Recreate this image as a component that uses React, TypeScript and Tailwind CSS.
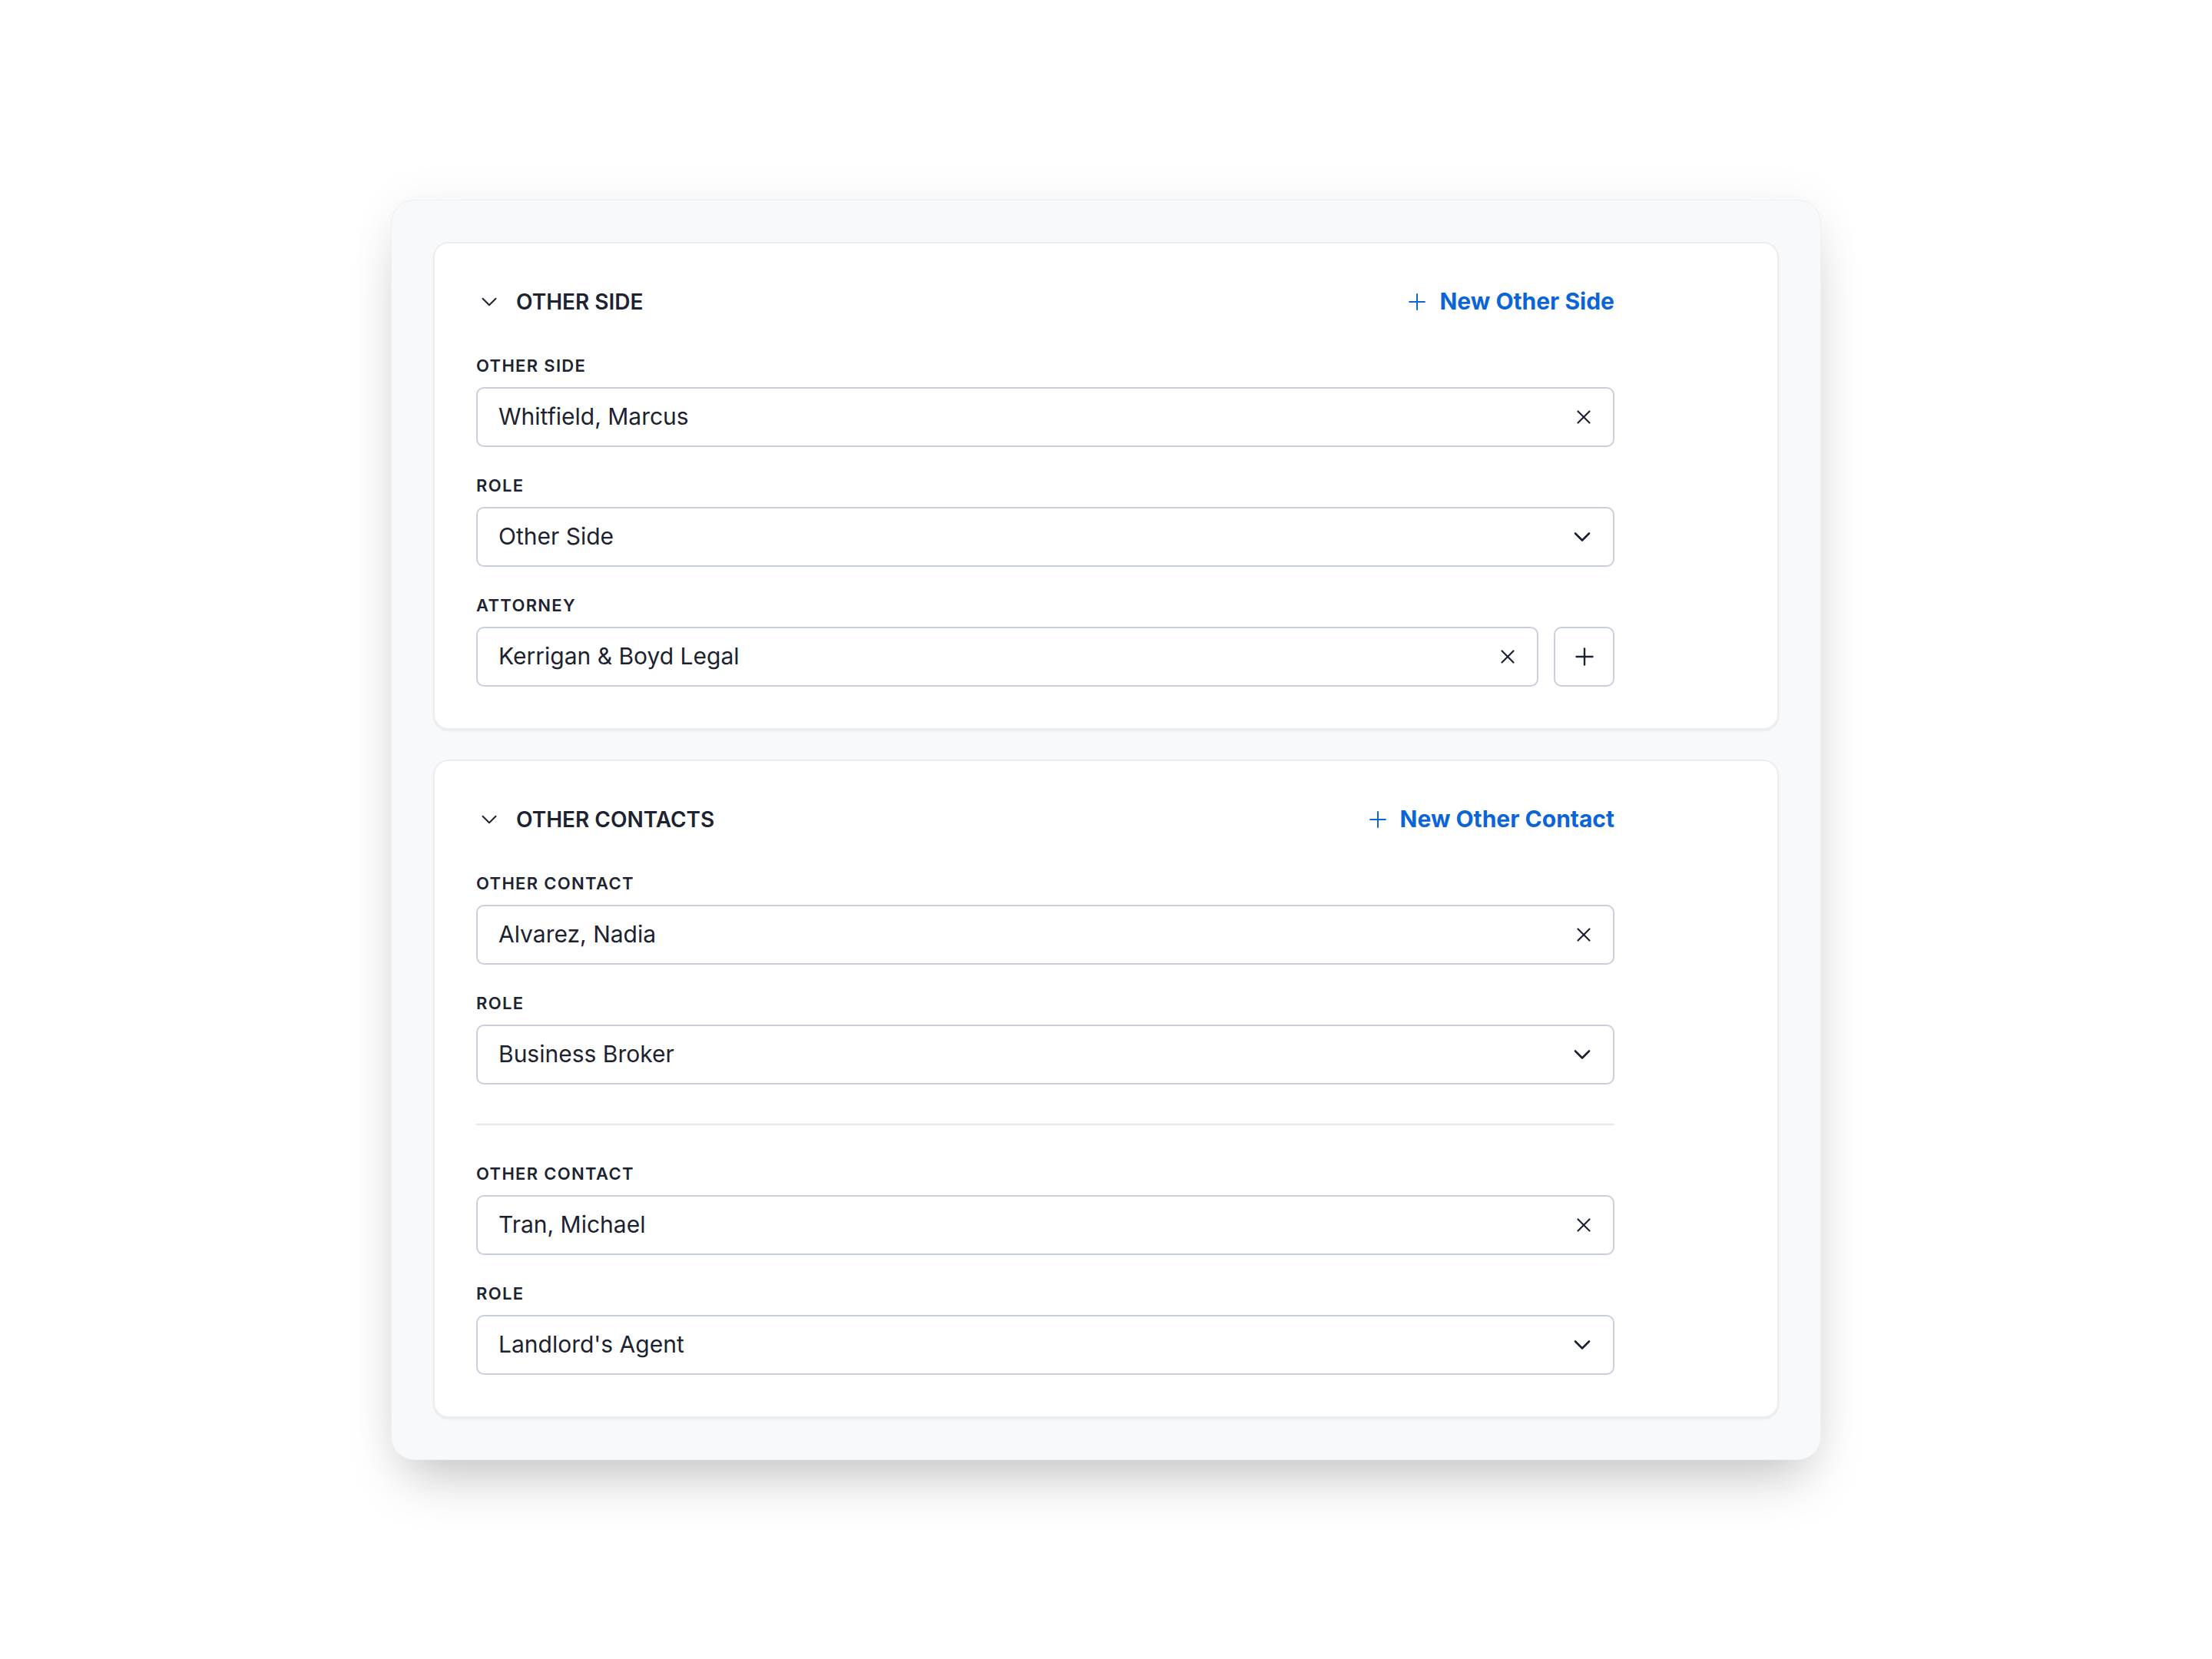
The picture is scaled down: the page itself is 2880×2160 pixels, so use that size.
import React from "react";

type IconProps = { size: number; stroke: number; className?: string };

function ChevronDown({ size, stroke, className }: IconProps) {
  return (
    <svg width={size} height={size} viewBox="0 0 24 24" fill="none" stroke="currentColor" strokeWidth={stroke} strokeLinecap="round" strokeLinejoin="round" className={className}>
      <path d="m6 9 6 6 6-6" />
    </svg>
  );
}

function XIcon({ size, stroke, className }: IconProps) {
  return (
    <svg width={size} height={size} viewBox="0 0 24 24" fill="none" stroke="currentColor" strokeWidth={stroke} strokeLinecap="round" strokeLinejoin="round" className={className}>
      <path d="M18 6 6 18" />
      <path d="m6 6 12 12" />
    </svg>
  );
}

function PlusIcon({ size, stroke, className }: IconProps) {
  return (
    <svg width={size} height={size} viewBox="0 0 24 24" fill="none" stroke="currentColor" strokeWidth={stroke} strokeLinecap="round" strokeLinejoin="round" className={className}>
      <path d="M5 12h14" />
      <path d="M12 5v14" />
    </svg>
  );
}

function SectionHeader({ title, action }: { title: string; action: string }) {
  return (
    <div className="flex h-[42px] items-center justify-between">
      <div className="flex items-center gap-[18px]">
        <ChevronDown size={34} stroke={1.4} className="text-[#1d2331]" />
        <span className="text-[28px] font-semibold text-[#1d2331]">{title}</span>
      </div>
      <button className="flex items-center gap-[12px] text-[30px] font-bold text-[#0b65d8]">
        <PlusIcon size={34} stroke={1.4} />
        <span>{action}</span>
      </button>
    </div>
  );
}

function Label({ children }: { children: React.ReactNode }) {
  return (
    <div className="text-[22px] font-semibold uppercase leading-[32px] tracking-[0.06em] text-[#1d2331]">{children}</div>
  );
}

function ClearableField({ value }: { value: string }) {
  return (
    <div className="flex h-[78px] flex-1 items-center justify-between rounded-[10px] border-2 border-[#c9cfdb] bg-white pl-[27px] pr-[23px]">
      <span className="text-[30px] text-[#1d2230]">{value}</span>
      <XIcon size={30} stroke={1.75} className="text-[#1d2230]" />
    </div>
  );
}

function SelectField({ value }: { value: string }) {
  return (
    <div className="flex h-[78px] items-center justify-between rounded-[10px] border-2 border-[#c9cfdb] bg-white pl-[27px] pr-[22px]">
      <span className="text-[30px] text-[#1d2230]">{value}</span>
      <ChevronDown size={36} stroke={1.75} className="text-[#1d2230]" />
    </div>
  );
}

function Field({ label, children, first }: { label: string; children: React.ReactNode; first?: boolean }) {
  return (
    <div className={first ? "" : "mt-[34px]"}>
      <Label>{label}</Label>
      <div className="mt-[12px] flex">{children}</div>
    </div>
  );
}

function Card({ children }: { children: React.ReactNode }) {
  return (
    <section className="rounded-[20px] border-2 border-[#eceef1] bg-white px-[54px] pb-[54px] pt-[55px] shadow-[0_2px_3px_rgba(15,23,42,0.06)]">
      <div className="w-[1482px]">{children}</div>
    </section>
  );
}

export default function App() {
  return (
    <div className="flex min-h-[2160px] w-full items-center justify-center bg-white font-['Inter',_'Noto_Sans',_sans-serif]">
      <div className="flex w-[1862px] flex-col gap-[39px] rounded-[30px] border border-[#eef0f2] bg-[#f8f9fa] p-[54px] shadow-[0_40px_70px_-20px_rgba(0,0,0,0.22),0_0_60px_rgba(0,0,0,0.05)]">
        <Card>
          <SectionHeader title="OTHER SIDE" action="New Other Side" />
          <div className="mt-[46px]">
            <Field label="Other Side" first>
              <ClearableField value="Whitfield, Marcus" />
            </Field>
            <Field label="Role">
              <div className="flex-1">
                <SelectField value="Other Side" />
              </div>
            </Field>
            <Field label="Attorney">
              <div className="flex flex-1 items-center gap-[20px]">
                <ClearableField value="Kerrigan & Boyd Legal" />
                <button className="flex h-[78px] w-[79px] items-center justify-center rounded-[10px] border-2 border-[#c9cfdb] bg-white text-[#1d2230]">
                  <PlusIcon size={36} stroke={1.6} />
                </button>
              </div>
            </Field>
          </div>
        </Card>

        <Card>
          <SectionHeader title="OTHER CONTACTS" action="New Other Contact" />
          <div className="mt-[46px]">
            <Field label="Other Contact" first>
              <ClearableField value="Alvarez, Nadia" />
            </Field>
            <Field label="Role">
              <div className="flex-1">
                <SelectField value="Business Broker" />
              </div>
            </Field>
          </div>
          <div className="mb-[47px] mt-[51px] h-[2px] bg-[#e5e7eb]" />
          <div>
            <Field label="Other Contact" first>
              <ClearableField value="Tran, Michael" />
            </Field>
            <Field label="Role">
              <div className="flex-1">
                <SelectField value="Landlord's Agent" />
              </div>
            </Field>
          </div>
        </Card>
      </div>
    </div>
  );
}
